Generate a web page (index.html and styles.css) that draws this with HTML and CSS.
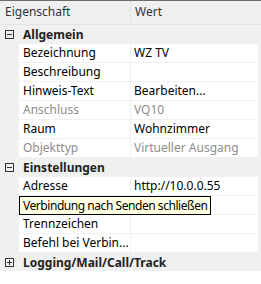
FILE: index.html
```html
<!DOCTYPE html>
<html lang="de">
<head>
    <meta charset="UTF-8">
    <title>Eigenschaften</title>
    <link rel="stylesheet" href="styles.css">
</head>
<body>
    <div class="grid">
        <div class="header">
            <div class="head-name">Eigenschaft</div>
            <div class="head-value">Wert</div>
        </div>
        <div class="rows">
            <div class="category">
                <svg class="toggle" width="9" height="9" viewBox="0 0 9 9"><rect x="0.5" y="0.5" width="8" height="8" fill="none" stroke="#333"/><path d="M2 4.5h5" stroke="#333"/></svg>
                <span>Allgemein</span>
            </div>
            <div class="prop"><div class="name">Bezeichnung</div><div class="value">WZ TV</div></div>
            <div class="prop"><div class="name">Beschreibung</div><div class="value"></div></div>
            <div class="prop"><div class="name">Hinweis-Text</div><div class="value">Bearbeiten...</div></div>
            <div class="prop disabled"><div class="name">Anschluss</div><div class="value">VQ10</div></div>
            <div class="prop"><div class="name">Raum</div><div class="value">Wohnzimmer</div></div>
            <div class="prop disabled"><div class="name">Objekttyp</div><div class="value">Virtueller Ausgang</div></div>
            <div class="category">
                <svg class="toggle" width="9" height="9" viewBox="0 0 9 9"><rect x="0.5" y="0.5" width="8" height="8" fill="none" stroke="#333"/><path d="M2 4.5h5" stroke="#333"/></svg>
                <span>Einstellungen</span>
            </div>
            <div class="prop"><div class="name">Adresse</div><div class="value">http://10.0.0.55</div></div>
            <div class="prop">
                <div class="name"></div><div class="value"></div>
                <div class="tooltip">Verbindung nach Senden schließen</div>
            </div>
            <div class="prop"><div class="name">Trennzeichen</div><div class="value"></div></div>
            <div class="prop"><div class="name">Befehl bei Verbin...</div><div class="value"></div></div>
            <div class="category">
                <svg class="toggle" width="9" height="9" viewBox="0 0 9 9"><rect x="0.5" y="0.5" width="8" height="8" fill="none" stroke="#333"/><path d="M2 4.5h5M4.5 2v5" stroke="#333"/></svg>
                <span>Logging/Mail/Call/Track</span>
            </div>
        </div>
    </div>
</body>
</html>
```
FILE: styles.css
```css
body {
    margin: 0;
    font-family: "Noto Sans", Arial, sans-serif;
    font-size: 12px;
    color: #000;
    background-color: #fff;
}
.grid {
    width: 261px;
    overflow: hidden;
}
.header {
    display: flex;
    height: 23px;
    border-top: 1px solid #6d6d6d;
    border-bottom: 1px solid #e3e3e3;
    background-color: #f0f0f0;
    color: #333;
}
.head-name {
    width: 125px;
    padding-left: 5px;
    line-height: 22px;
    border-right: 1px solid #e3e3e3;
}
.head-value {
    padding-left: 4px;
    line-height: 22px;
}
.rows {
    display: flex;
    flex-direction: column;
    gap: 1px;
    background-color: #f0f0f0;
    padding-right: 3px;
}
.category {
    display: flex;
    align-items: center;
    height: 18px;
    font-weight: bold;
    color: #222;
}
.toggle {
    margin: 0 9px 0 5px;
}
.prop {
    position: relative;
    display: flex;
    height: 18px;
    padding-left: 19px;
    gap: 1px;
}
.name, .value {
    background-color: #fff;
    line-height: 18px;
    white-space: nowrap;
    overflow: hidden;
}
.name {
    width: 107px;
    padding-left: 4px;
}
.value {
    flex: 1;
    padding-left: 3px;
}
.disabled .name, .disabled .value {
    color: #8d8d8d;
}
.tooltip {
    position: absolute;
    left: 19px;
    top: 0;
    height: 17px;
    padding: 0 3px;
    border: 1px solid #000;
    background-color: #ffffe1;
    line-height: 17px;
    letter-spacing: -0.45px;
    white-space: nowrap;
}
```
